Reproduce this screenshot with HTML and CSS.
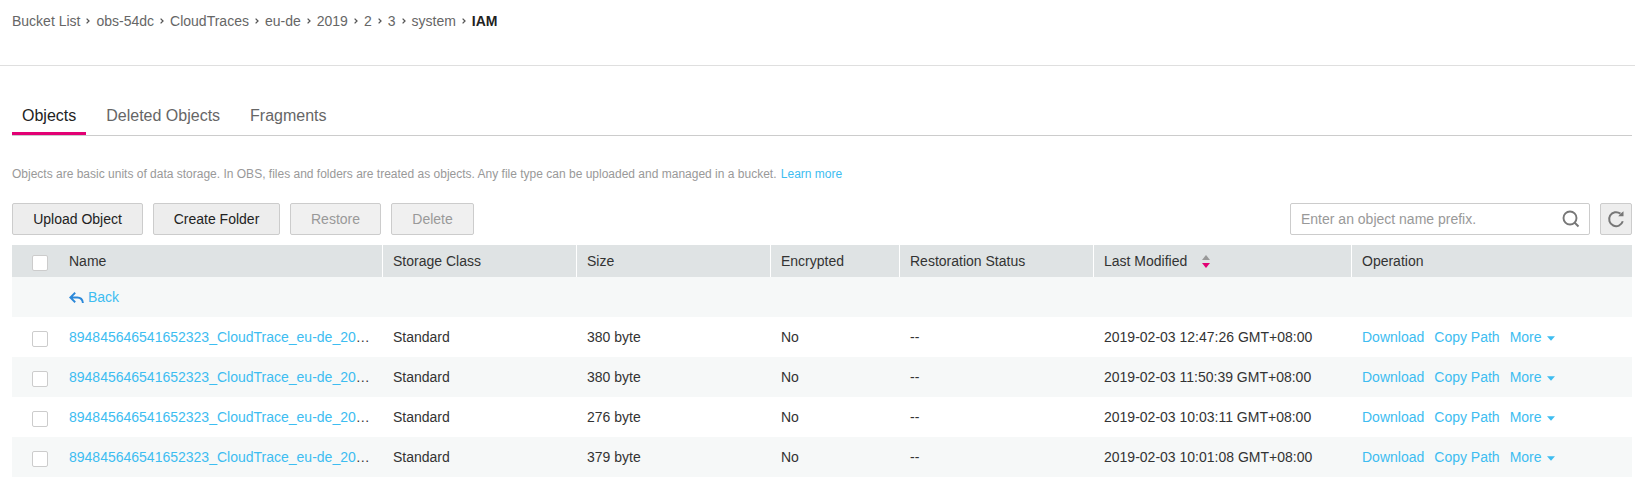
FILE: index.html
```html
<!DOCTYPE html>
<html lang="en">
<head>
<meta charset="utf-8">
<title>Objects</title>
<link rel="stylesheet" href="styles.css">
</head>
<body>
<svg class="defs" width="0" height="0" aria-hidden="true">
  <symbol id="sep" viewBox="0 0 4 6"><path d="M.6.6 3 3 .6 5.4" fill="none" stroke="#555" stroke-width="1.3"/></symbol>
  <symbol id="caret" viewBox="0 0 8 5"><path d="M0 .3h8L4 4.8z" fill="#3dbdf1"/></symbol>
</svg>
<nav class="crumbs">
  <a>Bucket List</a><svg class="sep"><use href="#sep"/></svg>
  <a>obs-54dc</a><svg class="sep"><use href="#sep"/></svg>
  <a>CloudTraces</a><svg class="sep"><use href="#sep"/></svg>
  <a>eu-de</a><svg class="sep"><use href="#sep"/></svg>
  <a>2019</a><svg class="sep"><use href="#sep"/></svg>
  <a>2</a><svg class="sep"><use href="#sep"/></svg>
  <a>3</a><svg class="sep"><use href="#sep"/></svg>
  <a>system</a><svg class="sep"><use href="#sep"/></svg>
  <b>IAM</b>
</nav>
<main class="content">
  <div class="tabs">
    <a class="tab active">Objects</a>
    <a class="tab">Deleted Objects</a>
    <a class="tab">Fragments</a>
  </div>
  <p class="intro">Objects are basic units of data storage. In OBS, files and folders are treated as objects. Any file type can be uploaded and managed in a bucket. <a class="link learn">Learn more</a></p>
  <div class="toolbar">
    <button class="btn upload">Upload Object</button>
    <button class="btn create">Create Folder</button>
    <button class="btn restore off">Restore</button>
    <button class="btn delete off">Delete</button>
    <div class="search"><span>Enter an object name prefix.</span>
      <svg width="18" height="18" viewBox="0 0 18 18" fill="none" stroke="#777" stroke-width="1.9"><circle cx="8" cy="8" r="6.5"/><path d="m12.5 12.5 4 4"/></svg>
    </div>
    <button class="refresh"><svg width="18" height="18" viewBox="0 0 18 18"><path d="M15.8 11.3A7 7 0 1 1 13.4 3.6" fill="none" stroke="#777" stroke-width="2"/><path d="M11.2 6.3h5.3V1.2l-2.2 1.7z" fill="#777"/></svg></button>
  </div>
  <div class="table">
    <div class="row head">
      <div class="cell check"><i class="box"></i></div><div class="cell">Name</div><div class="cell">Storage Class</div><div class="cell">Size</div><div class="cell">Encrypted</div><div class="cell">Restoration Status</div>
      <div class="cell">Last Modified <svg class="sort" width="8" height="13" viewBox="0 0 8 13"><path d="M0 5 4 0l4 5z" fill="#999"/><path d="M0 8h8l-4 5z" fill="#e20074"/></svg></div>
      <div class="cell">Operation</div>
    </div>
    <div class="row">
      <div class="cell check"></div>
      <div class="cell"><a class="link back"><svg width="15" height="12" viewBox="0 0 15 12" fill="none" stroke="#2b88d9" stroke-width="1.9"><path d="M6.2.8 1.3 5.5l4.9 4.8M1.5 5.5h6.8q5 0 5.6 5.5"/></svg>Back</a></div>
    </div>
    <div class="row">
      <div class="cell check"><i class="box"></i></div><div class="cell name"><a class="link">894845646541652323_CloudTrace_eu-de_20</a>…</div><div class="cell">Standard</div><div class="cell">380 byte</div><div class="cell">No</div><div class="cell">--</div><div class="cell">2019-02-03 12:47:26 GMT+08:00</div>
      <div class="cell ops"><a>Download</a><a>Copy Path</a><a>More<svg class="caret"><use href="#caret"/></svg></a></div>
    </div>
    <div class="row">
      <div class="cell check"><i class="box"></i></div><div class="cell name"><a class="link">894845646541652323_CloudTrace_eu-de_20</a>…</div><div class="cell">Standard</div><div class="cell">380 byte</div><div class="cell">No</div><div class="cell">--</div><div class="cell">2019-02-03 11:50:39 GMT+08:00</div>
      <div class="cell ops"><a>Download</a><a>Copy Path</a><a>More<svg class="caret"><use href="#caret"/></svg></a></div>
    </div>
    <div class="row">
      <div class="cell check"><i class="box"></i></div><div class="cell name"><a class="link">894845646541652323_CloudTrace_eu-de_20</a>…</div><div class="cell">Standard</div><div class="cell">276 byte</div><div class="cell">No</div><div class="cell">--</div><div class="cell">2019-02-03 10:03:11 GMT+08:00</div>
      <div class="cell ops"><a>Download</a><a>Copy Path</a><a>More<svg class="caret"><use href="#caret"/></svg></a></div>
    </div>
    <div class="row">
      <div class="cell check"><i class="box"></i></div><div class="cell name"><a class="link">894845646541652323_CloudTrace_eu-de_20</a>…</div><div class="cell">Standard</div><div class="cell">379 byte</div><div class="cell">No</div><div class="cell">--</div><div class="cell">2019-02-03 10:01:08 GMT+08:00</div>
      <div class="cell ops"><a>Download</a><a>Copy Path</a><a>More<svg class="caret"><use href="#caret"/></svg></a></div>
    </div>
  </div>
</main>
</body>
</html>
```
FILE: styles.css
```css
* { box-sizing: border-box; }
body { margin: 0; background: #fff; color: #333; font: 14px/20px "Liberation Sans", Arial, sans-serif; overflow: hidden; }
.defs { display: block; }
.crumbs { display: flex; align-items: center; height: 66px; padding: 0 12px 23px; border-bottom: 1px solid #dfdfdf; color: #666; }
.crumbs b { color: #222; }
.sep { width: 4px; height: 6px; margin: 0 6px; }
.content { padding: 33px 3px 0 12px; }
.tabs { display: flex; height: 37px; border-bottom: 1px solid #ccc; }
.tab { height: 36px; padding: 7px 10px 0; margin-right: 10px; font-size: 16px; color: #666; }
.tab.active { color: #222; border-bottom: 3px solid #e20074; }
.intro { margin: 28px 0 19px; font-size: 12px; color: #999; }
.link { color: #3dbdf1; }
.learn { margin-left: 1px; }
.toolbar { display: flex; height: 32px; margin-bottom: 10px; }
.btn { height: 32px; padding: 0; margin-right: 10px; border: 1px solid #ccc; border-radius: 2px; background: #ededed; color: #222; font: inherit; }
.upload { width: 131px; }
.create { width: 127px; }
.restore { width: 91px; }
.delete { width: 83px; }
.btn.off { background: #f0f0f0; color: #999; }
.search { display: flex; align-items: center; justify-content: space-between; width: 300px; margin-left: auto; padding: 0 9px 0 10px; border: 1px solid #ccc; border-radius: 2px; color: #999; }
.refresh { display: flex; align-items: center; justify-content: center; width: 32px; margin-left: 10px; padding: 0; border: 1px solid #ccc; border-radius: 2px; background: #ededed; }
.row { display: grid; grid-template-columns: 47px 324px 194px 194px 129px 194px 258px 1fr; height: 40px; }
.row:nth-child(even) { background: #f6f8f8; }
.head { height: 32px; background: #dfe3e4; }
.cell { display: flex; align-items: center; padding-left: 10px; white-space: nowrap; }
.head .cell:not(.check) { border-right: 1px solid #fff; }
.head .cell:last-child { border-right: 0; }
.check { padding: 4px 0 0 20px; }
.box { width: 16px; height: 16px; border: 1px solid #ccc; border-radius: 2px; background: #fff; }
.sort { margin: 1px 0 0 15px; }
.back { display: flex; align-items: center; gap: 4px; }
.back svg { margin-top: 2px; }
.ops { gap: 10px; color: #3dbdf1; }
.caret { width: 8px; height: 5px; margin-left: 5px; vertical-align: 1px; }
```
